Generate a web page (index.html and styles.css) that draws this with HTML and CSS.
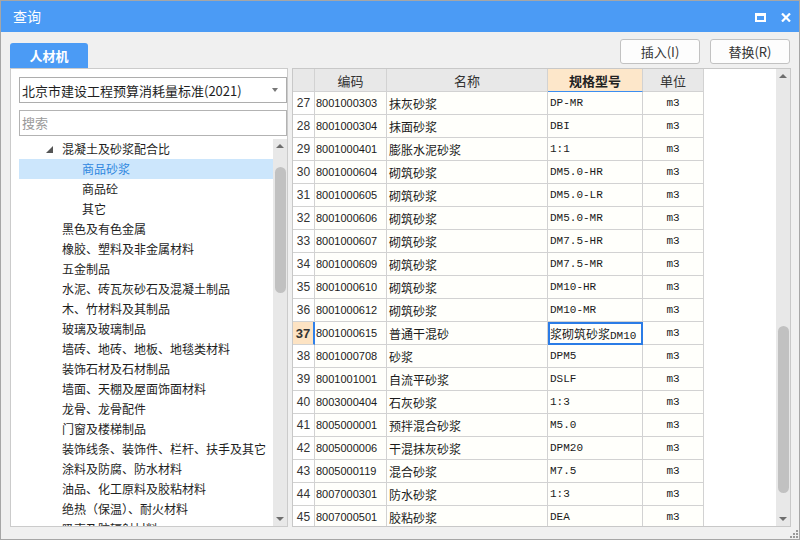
FILE: index.html
```html
<!DOCTYPE html>
<html lang="zh-CN">
<head>
<meta charset="utf-8">
<title>查询</title>
<link rel="stylesheet" href="styles.css">
</head>
<body>
<div class="window">
  <div class="titlebar">
    <span class="title">查询</span>
    <span class="tb-icons">
      <svg class="ico-max" width="11" height="9" viewBox="0 0 11 9"><rect x="1" y="1.5" width="9" height="6.5" fill="none" stroke="#fff" stroke-width="2"/><rect x="0" y="0" width="11" height="3" fill="#fff"/></svg>
      <svg class="ico-close" width="10" height="9" viewBox="0 0 10 9"><path d="M1 0.5 L9 8.5 M9 0.5 L1 8.5" stroke="#fff" stroke-width="2.2" fill="none"/></svg>
    </span>
  </div>
  <div class="toolbar">
    <div class="tab">人材机</div>
    <div class="spacer"></div>
    <button class="btn">插入(I)</button>
    <button class="btn">替换(R)</button>
  </div>
  <div class="main">
    <div class="left">
      <div class="select">
        <span>北京市建设工程预算消耗量标准(2021)</span>
        <span class="caret"></span>
      </div>
      <div class="search">搜索</div>
      <div class="tree">
        <div class="tree-list">
          <div class="node l1"><svg class="tri" width="7" height="7" viewBox="0 0 7 7"><path d="M7 0 L7 7 L0 7 Z" fill="#555"/></svg>混凝土及砂浆配合比</div>
          <div class="node l2 active">商品砂浆</div>
          <div class="node l2">商品砼</div>
          <div class="node l2">其它</div>
          <div class="node l1">黑色及有色金属</div>
          <div class="node l1">橡胶、塑料及非金属材料</div>
          <div class="node l1">五金制品</div>
          <div class="node l1">水泥、砖瓦灰砂石及混凝土制品</div>
          <div class="node l1">木、竹材料及其制品</div>
          <div class="node l1">玻璃及玻璃制品</div>
          <div class="node l1">墙砖、地砖、地板、地毯类材料</div>
          <div class="node l1">装饰石材及石材制品</div>
          <div class="node l1">墙面、天棚及屋面饰面材料</div>
          <div class="node l1">龙骨、龙骨配件</div>
          <div class="node l1">门窗及楼梯制品</div>
          <div class="node l1">装饰线条、装饰件、栏杆、扶手及其它</div>
          <div class="node l1">涂料及防腐、防水材料</div>
          <div class="node l1">油品、化工原料及胶粘材料</div>
          <div class="node l1">绝热（保温）、耐火材料</div>
          <div class="node l1">吸声及防辐射材料</div>
        </div>
        <div class="vscroll tree-scroll">
          <div class="arrow-box"><span class="arr-up"></span></div>
          <div class="thumb tree-thumb"></div>
          <div class="spacer"></div>
          <div class="arrow-box"><span class="arr-down"></span></div>
        </div>
      </div>
    </div>
    <div class="right">
      <div class="grid-wrap">
        <table class="grid">
          <colgroup>
            <col class="c-no"><col class="c-code"><col class="c-name"><col class="c-spec"><col class="c-unit">
          </colgroup>
          <thead>
            <tr><th></th><th>编码</th><th>名称</th><th class="h-spec">规格型号</th><th>单位</th></tr>
          </thead>
          <tbody>
            <tr><td class="no">27</td><td class="code">8001000303</td><td class="name">抹灰砂浆</td><td class="spec">DP-MR</td><td class="unit">m3</td></tr>
            <tr><td class="no">28</td><td class="code">8001000304</td><td class="name">抹面砂浆</td><td class="spec">DBI</td><td class="unit">m3</td></tr>
            <tr><td class="no">29</td><td class="code">8001000401</td><td class="name">膨胀水泥砂浆</td><td class="spec">1:1</td><td class="unit">m3</td></tr>
            <tr><td class="no">30</td><td class="code">8001000604</td><td class="name">砌筑砂浆</td><td class="spec">DM5.0-HR</td><td class="unit">m3</td></tr>
            <tr><td class="no">31</td><td class="code">8001000605</td><td class="name">砌筑砂浆</td><td class="spec">DM5.0-LR</td><td class="unit">m3</td></tr>
            <tr><td class="no">32</td><td class="code">8001000606</td><td class="name">砌筑砂浆</td><td class="spec">DM5.0-MR</td><td class="unit">m3</td></tr>
            <tr><td class="no">33</td><td class="code">8001000607</td><td class="name">砌筑砂浆</td><td class="spec">DM7.5-HR</td><td class="unit">m3</td></tr>
            <tr><td class="no">34</td><td class="code">8001000609</td><td class="name">砌筑砂浆</td><td class="spec">DM7.5-MR</td><td class="unit">m3</td></tr>
            <tr><td class="no">35</td><td class="code">8001000610</td><td class="name">砌筑砂浆</td><td class="spec">DM10-HR</td><td class="unit">m3</td></tr>
            <tr><td class="no">36</td><td class="code">8001000612</td><td class="name">砌筑砂浆</td><td class="spec">DM10-MR</td><td class="unit">m3</td></tr>
            <tr class="cur"><td class="no">37</td><td class="code">8001000615</td><td class="name">普通干混砂</td><td class="spec sel"><span class="cj">浆砌筑砂浆</span>DM10</td><td class="unit">m3</td></tr>
            <tr><td class="no">38</td><td class="code">8001000708</td><td class="name">砂浆</td><td class="spec">DPM5</td><td class="unit">m3</td></tr>
            <tr><td class="no">39</td><td class="code">8001001001</td><td class="name">自流平砂浆</td><td class="spec">DSLF</td><td class="unit">m3</td></tr>
            <tr><td class="no">40</td><td class="code">8003000404</td><td class="name">石灰砂浆</td><td class="spec">1:3</td><td class="unit">m3</td></tr>
            <tr><td class="no">41</td><td class="code">8005000001</td><td class="name">预拌混合砂浆</td><td class="spec">M5.0</td><td class="unit">m3</td></tr>
            <tr><td class="no">42</td><td class="code">8005000006</td><td class="name">干混抹灰砂浆</td><td class="spec">DPM20</td><td class="unit">m3</td></tr>
            <tr><td class="no">43</td><td class="code">8005000119</td><td class="name">混合砂浆</td><td class="spec">M7.5</td><td class="unit">m3</td></tr>
            <tr><td class="no">44</td><td class="code">8007000301</td><td class="name">防水砂浆</td><td class="spec">1:3</td><td class="unit">m3</td></tr>
            <tr><td class="no">45</td><td class="code">8007000501</td><td class="name">胶粘砂浆</td><td class="spec">DEA</td><td class="unit">m3</td></tr>
          </tbody>
        </table>
      </div>
      <div class="vscroll grid-scroll">
        <div class="arrow-box"><span class="arr-up"></span></div>
        <div class="thumb grid-thumb"></div>
        <div class="spacer"></div>
        <div class="arrow-box"><span class="arr-down"></span></div>
      </div>
    </div>
  </div>
  <div class="statusbar">
    <svg class="grip" width="8" height="8" viewBox="0 0 8 8" fill="#9a9a9a"><rect x="6" y="0" width="2" height="2"/><rect x="3" y="3" width="2" height="2"/><rect x="6" y="3" width="2" height="2"/><rect x="0" y="6" width="2" height="2"/><rect x="3" y="6" width="2" height="2"/><rect x="6" y="6" width="2" height="2"/></svg>
  </div>
</div>
</body>
</html>
```
FILE: styles.css
```css
* { box-sizing: border-box; }
html, body { margin: 0; padding: 0; }
body {
  font-family: "Noto Sans CJK SC", "Liberation Sans", sans-serif;
  color: #222;
}
.window {
  width: 800px;
  height: 540px;
  border: 1px solid #a6a6a6;
  background: #f0f0f0;
  display: flex;
  flex-direction: column;
  overflow: hidden;
}
.titlebar {
  height: 31px;
  flex: none;
  background: #4b9bf5;
  color: #fff;
  display: flex;
  align-items: center;
  padding: 0 8px 0 12px;
}
.title { font-size: 14px; line-height: 31px; }
.tb-icons {
  margin-left: auto;
  display: flex;
  align-items: center;
  gap: 15px;
  padding-top: 1px;
}
.toolbar {
  height: 36px;
  flex: none;
  display: flex;
  align-items: flex-start;
  padding: 0 9px;
}
.spacer { flex: 1; }
.tab {
  margin-top: 11px;
  width: 78px;
  height: 25px;
  background: #4b9bf5;
  color: #fff;
  font-size: 13px;
  font-weight: bold;
  line-height: 25px;
  text-align: center;
  border-radius: 3px 3px 0 0;
}
.btn {
  margin-top: 7px;
  width: 80px;
  height: 25px;
  margin-left: 10px;
  border: 1px solid #c2c2c2;
  border-radius: 3px;
  background: #fdfdfd;
  font-family: "Noto Sans CJK SC", "Liberation Sans", sans-serif;
  font-size: 13px;
  color: #333;
  padding: 0;
  line-height: 22px;
}
.main {
  height: 459px;
  flex: none;
  display: flex;
  gap: 4px;
  padding: 0 8px 0 9px;
}
.left {
  width: 278px;
  border: 1px solid #cbcbcb;
  background: #fff;
  padding: 8px 0 0 8px;
  display: flex;
  flex-direction: column;
  overflow: hidden;
}
.select {
  height: 26px;
  flex: none;
  border: 1px solid #adadad;
  display: flex;
  align-items: center;
  padding: 0 8px 0 2px;
  font-size: 13px;
  color: #1e1e1e;
}
.caret {
  margin-left: auto;
  width: 0; height: 0;
  border-left: 3px solid transparent;
  border-right: 3px solid transparent;
  border-top: 4px solid #777;
}
.search {
  height: 26px;
  flex: none;
  margin-top: 7px;
  border: 1px solid #b3b3b3;
  font-size: 13px;
  color: #9a9a9a;
  line-height: 24px;
  padding-left: 2px;
}
.tree {
  margin-top: 3px;
  flex: 1;
  display: flex;
  min-height: 0;
}
.tree-list {
  flex: 1;
  overflow: hidden;
}
.node {
  height: 20px;
  line-height: 20px;
  font-size: 12px;
  color: #1e1e1e;
  white-space: nowrap;
  display: flex;
  align-items: center;
}
.node.l1 { padding-left: 43px; }
.node.l2 { padding-left: 63px; }
.node .tri { margin-left: -16px; margin-right: 9px; margin-top: 1px; }
.node.active { background: #cce6fc; color: #2f86df; }
.vscroll {
  width: 14px;
  flex: none;
  background: #e8e8e8;
  display: flex;
  flex-direction: column;
  align-items: center;
}
.arrow-box {
  height: 14px;
  width: 14px;
  flex: none;
  display: flex;
  align-items: center;
  justify-content: center;
}
.arr-up {
  width: 0; height: 0;
  border-left: 4px solid transparent;
  border-right: 4px solid transparent;
  border-bottom: 4px solid #6e6e6e;
}
.arr-down {
  width: 0; height: 0;
  border-left: 4px solid transparent;
  border-right: 4px solid transparent;
  border-top: 4px solid #6e6e6e;
}
.thumb {
  width: 11px;
  background: #c1c1c1;
  border-radius: 6px;
  flex: none;
}
.tree-thumb { margin-top: 14px; height: 126px; }
.right {
  width: 499px;
  border: 1px solid #c8c8c8;
  background: #fff;
  display: flex;
  overflow: hidden;
}
.grid-wrap {
  flex: 1;
  overflow: hidden;
}
.grid-scroll { }
.grid-thumb { margin-top: 243px; height: 167px; }
.grid {
  border-collapse: separate;
  border-spacing: 0;
  table-layout: fixed;
  width: 411px;
}
.c-no { width: 22px; }
.c-code { width: 72px; }
.c-name { width: 161px; }
.c-spec { width: 95px; }
.c-unit { width: 61px; }
.grid th, .grid td {
  height: 23px;
  padding: 0;
  border-right: 1px solid #d2d2d2;
  border-bottom: 1px solid #d2d2d2;
  white-space: nowrap;
  overflow: hidden;
}
.grid th {
  background: #e8e8e8;
  font-weight: normal;
  font-size: 13px;
  color: #333;
  text-align: center;
}
.grid th.h-spec {
  background: #fde7ca;
  font-weight: bold;
  color: #222;
  border-bottom: 1px solid #3c8ef0;
}
.grid td { background: #fffffb; font-size: 12px; color: #1a1a1a; }
.grid td.no {
  background: #fff;
  text-align: center;
  font-family: "Liberation Sans", sans-serif;
  font-size: 12px;
  color: #333;
}
.grid td.code {
  font-family: "Liberation Sans", sans-serif;
  font-size: 11px;
  padding-left: 1px;
}
.grid td.name { padding-left: 2px; font-size: 12px; }
.grid td.spec {
  font-family: "Liberation Mono", "Noto Sans CJK SC", monospace;
  font-size: 11px;
  padding-left: 2px;
}
.grid td.spec .cj { font-family: "Noto Sans CJK SC", sans-serif; font-size: 12px; }
.grid td.unit {
  text-align: center;
  font-family: "Liberation Mono", monospace;
  font-size: 11px;
}
.grid tr.cur td.no {
  background: #fde3c3;
  font-weight: bold;
  font-size: 13px;
  border-right: 2px solid #2f80ea;
}
.grid td.sel {
  outline: 2px solid #2b7ce6;
  outline-offset: -2px;
}
.statusbar {
  flex: 1;
  display: flex;
  justify-content: flex-end;
  align-items: flex-end;
  padding: 0 1px 1px 0;
}
```
